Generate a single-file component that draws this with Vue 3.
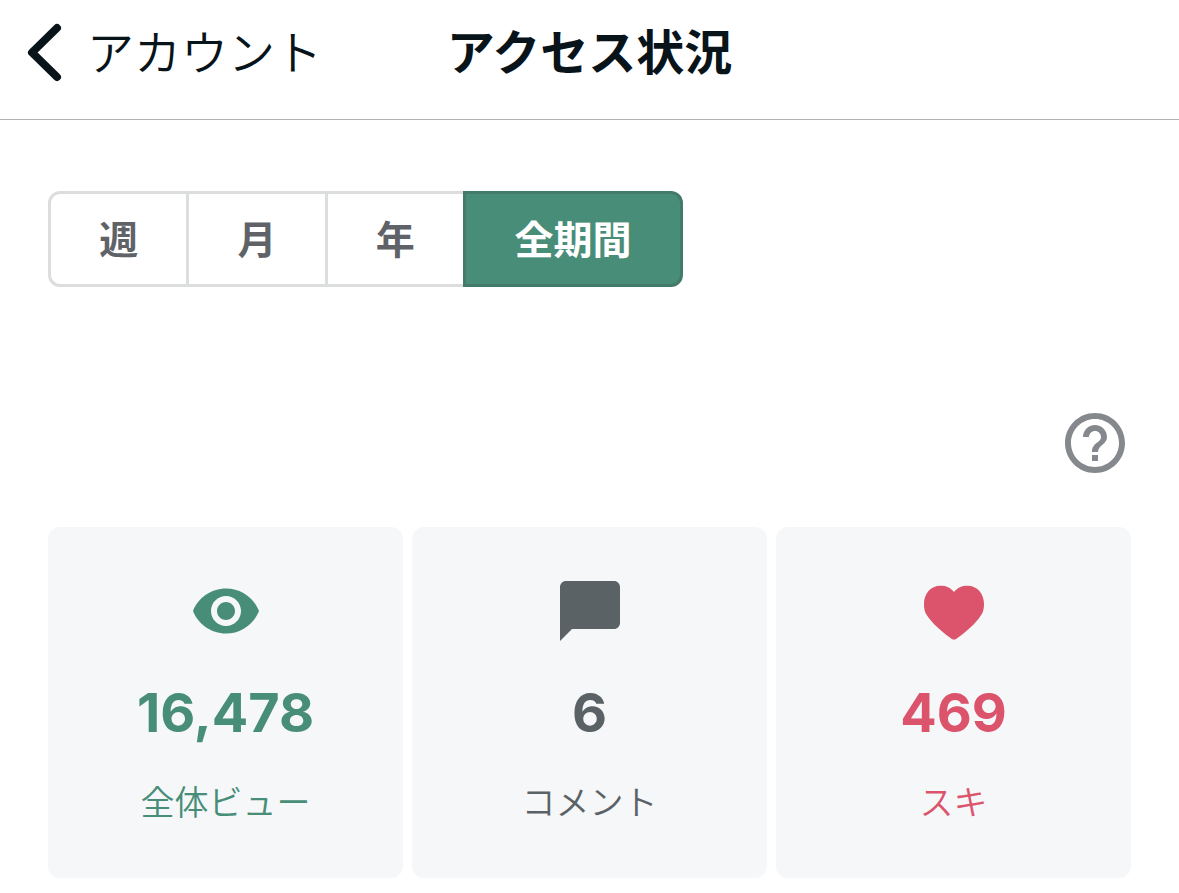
<script setup>
import { ref } from 'vue'
const periods = ['週', '月', '年', '全期間']
const selected = ref('全期間')
const stats = [
  { kind: 'views', value: '16,478', label: '全体ビュー' },
  { kind: 'comments', value: '6', label: 'コメント' },
  { kind: 'likes', value: '469', label: 'スキ' },
]
</script>

<template>
  <div class="page">
    <header class="bar">
      <a class="back" href="#">
        <svg width="36" height="60" viewBox="0 0 36 60" aria-hidden="true"><path d="M31 5 6 29.500 31 54" fill="none" stroke="currentColor" stroke-width="8" stroke-linecap="round" stroke-linejoin="round" /></svg>
        <span>アカウント</span>
      </a>
      <h1>アクセス状況</h1>
    </header>
    <main>
      <div class="periods" role="group" aria-label="期間">
        <button v-for="p in periods" :key="p" type="button" :class="{ active: p === selected }" :aria-pressed="p === selected" @click="selected = p">{{ p }}</button>
      </div>
      <div class="help-row">
        <button class="help" type="button" aria-label="ヘルプ">
          <svg width="72" height="72" viewBox="0 0 24 24" aria-hidden="true"><path fill="currentColor" d="M11 18h2v-2h-2v2zm1-16C6.480 2 2 6.480 2 12s4.480 10 10 10 10-4.480 10-10S17.520 2 12 2zm0 18c-4.410 0-8-3.590-8-8s3.590-8 8-8 8 3.590 8 8-3.590 8-8 8zm0-14c-2.210 0-4 1.790-4 4h2c0-1.100.9-2 2-2s2 .9 2 2c0 2-3 1.750-3 5h2c0-2.250 3-2.500 3-5 0-2.210-1.790-4-4-4z" /></svg>
        </button>
      </div>
      <section class="stats">
        <article v-for="s in stats" :key="s.kind" class="card" :class="s.kind">
          <svg width="72" height="72" viewBox="0 0 24 24" aria-hidden="true">
            <path v-if="s.kind === 'views'" fill="currentColor" d="M12 4.500C7 4.500 2.730 7.610 1 12c1.730 4.390 6 7.500 11 7.500s9.270-3.110 11-7.500c-1.730-4.390-6-7.500-11-7.500zM12 17c-2.760 0-5-2.240-5-5s2.240-5 5-5 5 2.240 5 5-2.240 5-5 5zm0-8c-1.660 0-3 1.340-3 3s1.340 3 3 3 3-1.340 3-3-1.340-3-3-3z" />
            <path v-else-if="s.kind === 'comments'" fill="currentColor" d="M20 2H4c-1.100 0-2 .9-2 2v18l4-4h14c1.100 0 2-.9 2-2V4c0-1.100-.9-2-2-2z" />
            <path v-else fill="currentColor" d="M12 5.700C10.800 4.200 9.400 3.600 7.500 3.600 4.200 3.600 2 6.300 2 9.700c0 2 .4 3.200 1.800 4.900 2.100 2.600 4.700 4.800 7.500 6.700q.7.400 1.400 0c2.800-1.900 5.400-4.100 7.500-6.700C21.600 12.900 22 11.700 22 9.700c0-3.400-2.200-6.100-5.500-6.100-1.900 0-3.300.6-4.500 2.100z" />
          </svg>
          <strong>{{ s.value }}</strong>
          <span>{{ s.label }}</span>
        </article>
      </section>
    </main>
  </div>
</template>

<style>
body { margin: 0; background: #fff; }
</style>

<style scoped>
.page { font-family: Inter, "Noto Sans CJK JP", sans-serif; color: #08131a; }
.bar { display: grid; grid-template-columns: 1fr auto 1fr; align-items: center; padding: 21px 26px 34px; border-bottom: 1px solid #b0b2b4; }
.back { display: flex; align-items: center; gap: 25px; color: inherit; text-decoration: none; font-size: 47px; line-height: 64px; font-weight: 350; white-space: nowrap; }
h1 { margin: 0; font-size: 48px; line-height: 64px; font-weight: 600; white-space: nowrap; }
main { padding: 71px 48px 15px; }
.periods { display: grid; grid-template-columns: 1fr 1fr 1fr 220px; max-width: 635px; }
button { font: inherit; cursor: pointer; }
.periods button { height: 96px; margin: 0 -3px 0 0; padding: 0 0 4px; border: 3px solid #dcdddd; background: #fff; color: #5f6368; font-size: 39px; font-weight: 600; }
.periods button:first-child { border-radius: 12px 0 0 12px; }
.periods button:last-child { margin: 0; border-radius: 0 12px 12px 0; }
.periods .active { position: relative; background: #488d78; border-color: #437b6a; color: #fff; }
.help-row { display: flex; justify-content: flex-end; margin-top: 120px; }
.help { width: 72px; height: 72px; padding: 0; border: 0; background: none; color: #85888c; }
svg { display: block; flex: none; }
.stats { display: grid; grid-template-columns: repeat(3, 1fr); gap: 9px; margin-top: 48px; }
.card { display: flex; flex-direction: column; align-items: center; padding: 48px 0 51px; border-radius: 12px; background: #f5f7f9; }
.card strong { margin-top: 30px; font-size: 54px; line-height: 72px; font-weight: 700; }
.card span { margin-top: 30px; font-size: 34px; line-height: 48px; font-weight: 350; }
.views { color: #488d78; }
.comments { color: #5b6266; }
.likes { color: #db546c; }
</style>
